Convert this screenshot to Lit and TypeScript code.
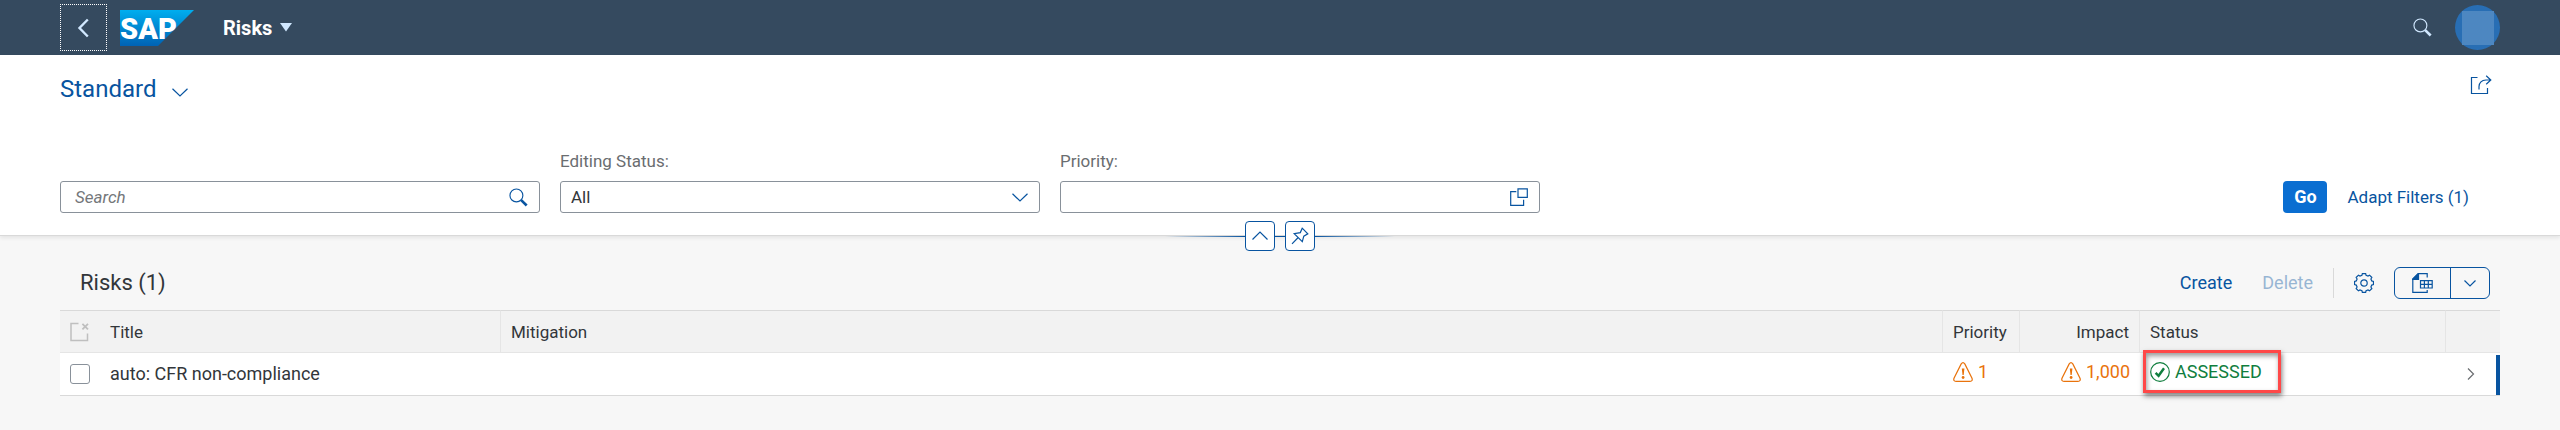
import { LitElement, html, svg, css } from "lit";
import { customElement } from "lit/decorators.js";

const chevronDown = html`<svg class="icon" width="16" height="16" viewBox="0 0 16 16" aria-hidden="true">
  <path d="M.5 4.8l7.500 7.200 7.500-7.200" />
</svg>`;

const magnifier = html`<svg class="icon" width="19" height="19" viewBox="0 0 20 20" aria-hidden="true">
  <circle cx="7.8" cy="7.8" r="6.8" />
  <path d="M12.8 12.8l5.8 5.6" stroke-width="2.8" />
</svg>`;

const warning = html`<svg class="icon" width="20" height="20" viewBox="0 0 20 20" role="img" aria-label="Warning">
  <path d="M8.2 1.9Q10-.7 11.8 1.9L19 16.2Q20 19.3 17 19.3H3Q0 19.3 1 16.2Z" />
  <path d="M8.8 6.5h2.6l-.7 6.4H9.5z" fill="currentColor" stroke="none" />
  <circle cx="10.1" cy="15.5" r="1.4" fill="currentColor" stroke="none" />
</svg>`;

const gearPath = (() => {
  const teeth = 8;
  const points: string[] = [];
  for (let i = 0; i < teeth; i++) {
    const base = (i * 2 * Math.PI) / teeth - Math.PI / 2;
    for (const [offset, radius] of [[-0.26, 8], [-0.17, 9.6], [0.17, 9.6], [0.26, 8]]) {
      const a = base + offset;
      points.push(`${(10 + radius * Math.cos(a)).toFixed(2)} ${(10 + radius * Math.sin(a)).toFixed(2)}`);
    }
  }
  return `M${points.join("L")}Z`;
})();

@customElement("app-root")
export class AppRoot extends LitElement {
  static styles = css`
    :host {
      display: block;
      min-height: 100vh;
      background: #f7f7f7;
      color: #32363a;
      font-family: Roboto, "Liberation Sans", sans-serif;
      font-size: 17px;
      line-height: 20px;
    }
    * {
      box-sizing: border-box;
    }
    button,
    input,
    select {
      font: inherit;
      color: inherit;
      margin: 0;
    }
    button {
      border: 0;
      background: none;
      padding: 0;
      cursor: pointer;
      display: flex;
      align-items: center;
      justify-content: center;
    }
    .icon {
      display: block;
      flex: none;
      fill: none;
      stroke: currentColor;
      stroke-width: 1.2;
    }
    .shell {
      display: flex;
      align-items: center;
      height: 55px;
      padding: 0 60px;
      background: #354a5f;
      color: #d1e8ff;
    }
    .back {
      width: 47px;
      height: 47px;
      border: 1px dotted #fff;
    }
    .logo {
      margin-left: 13px;
      display: block;
    }
    .logo-text {
      font: 900 29px Roboto, "Liberation Sans", sans-serif;
      fill: #fff;
    }
    .app-title {
      margin-left: 29px;
      gap: 8px;
      font-size: 20px;
      font-weight: 700;
      color: #fff;
    }
    .grow {
      flex: 1;
    }
    .avatar {
      width: 45px;
      height: 45px;
      margin-left: 23px;
      border-radius: 50%;
      background: #286eb4;
    }
    .avatar-mask {
      width: 32px;
      height: 34px;
      background: #4d87c1;
    }
    .filters {
      background: #fff;
      border-bottom: 1px solid #d9d9d9;
      box-shadow: 0 2px 4px rgba(0, 0, 0, 0.08);
      padding: 16px 60px 0;
    }
    .row {
      display: flex;
      align-items: center;
      justify-content: space-between;
    }
    .variant {
      height: 36px;
      gap: 16px;
      font-size: 24px;
      line-height: 36px;
      color: #0854a0;
    }
    .variant .icon {
      margin-top: 6px;
    }
    .share {
      color: #0854a0;
      margin-right: 8px;
      padding-bottom: 8px;
    }
    .fields {
      display: flex;
      align-items: flex-end;
      gap: 20px;
      margin-top: 44px;
    }
    .field {
      width: 480px;
      display: flex;
      flex-direction: column;
      gap: 10px;
    }
    .label {
      color: #6a6d70;
    }
    .box {
      display: flex;
      align-items: center;
      height: 32px;
      border: 1px solid #89919a;
      border-radius: 3px;
      background: #fff;
      color: #0854a0;
      padding-right: 11px;
    }
    .control {
      flex: 1;
      min-width: 0;
      height: 30px;
      border: 0;
      background: none;
      outline: 0;
      appearance: none;
      padding: 0 10px;
      color: #32363a;
    }
    .search {
      padding: 0 14px;
    }
    .search::placeholder {
      color: #74777a;
      font-style: italic;
      opacity: 1;
    }
    .search::-webkit-search-cancel-button {
      display: none;
    }
    .go {
      width: 44px;
      height: 32px;
      border-radius: 4px;
      background: #0a6ed1;
      color: #fff;
      font-size: 18px;
      font-weight: 700;
    }
    .adapt {
      height: 32px;
      color: #0854a0;
      margin-right: 31px;
    }
    .handles {
      display: flex;
      justify-content: center;
      align-items: center;
      height: 30px;
      margin: 8px 0 -16px;
      position: relative;
      color: #0854a0;
    }
    .line {
      width: 80px;
      height: 1px;
      background: linear-gradient(to right, transparent, #0854a0);
    }
    .line-mid {
      width: 10px;
      height: 1px;
      background: #0854a0;
    }
    .line-end {
      background: linear-gradient(to left, transparent, #0854a0);
    }
    .handle {
      width: 30px;
      height: 30px;
      border: 1px solid #0854a0;
      border-radius: 4px;
      background: #fff;
    }
    .content {
      padding: 31px 60px 0;
    }
    .toolbar {
      display: flex;
      align-items: center;
      height: 32px;
      padding: 0 10px 0 20px;
      color: #0854a0;
    }
    .table-title {
      margin: 0;
      flex: 1;
      font-size: 22px;
      font-weight: 400;
      line-height: 30px;
      color: #32363a;
    }
    .create,
    .delete {
      font-size: 18px;
    }
    .delete {
      margin-left: 30px;
      color: #0854a0;
      opacity: 0.4;
    }
    .separator {
      width: 1px;
      height: 30px;
      margin: 0 20px;
      background: #d9d9d9;
    }
    .split {
      display: flex;
      width: 96px;
      height: 32px;
      margin-left: 20px;
      border: 1px solid #0854a0;
      border-radius: 6px;
    }
    .export {
      flex: 1;
    }
    .menu {
      width: 39px;
      border-left: 1px solid #0854a0;
    }
    .table {
      width: 100%;
      margin-top: 11px;
      border-collapse: separate;
      border-spacing: 0;
      table-layout: fixed;
    }
    .c-select {
      width: 40px;
    }
    .c-title {
      width: 401px;
    }
    .c-priority {
      width: 77px;
    }
    .c-impact {
      width: 120px;
    }
    .c-status {
      width: 306px;
    }
    .c-nav {
      width: 54px;
    }
    th {
      height: 43px;
      padding: 0 10px;
      background: #f2f2f2;
      border-top: 1px solid #d9d9d9;
      border-bottom: 1px solid #e5e5e5;
      border-right: 1px solid #e5e5e5;
      font-weight: 400;
      text-align: left;
    }
    td {
      height: 43px;
      padding: 0 10px;
      background: #fff;
      border-bottom: 1px solid #d9d9d9;
      font-size: 18px;
    }
    th.plain {
      border-right: 0;
    }
    th.num,
    td.num {
      text-align: right;
    }
    td.nav {
      padding-right: 25px;
      background: linear-gradient(#0854a0, #0854a0) right bottom / 4px 40px no-repeat #fff;
      color: #6a6d70;
    }
    .nav-icon {
      margin-left: auto;
    }
    .deselect {
      color: #bfbfbf;
    }
    .check {
      display: block;
      appearance: none;
      width: 20px;
      height: 20px;
      border: 1px solid #89919a;
      border-radius: 3px;
      background: #fff;
    }
    .state {
      display: inline-flex;
      align-items: center;
      gap: 5px;
      color: #e9730c;
      vertical-align: middle;
      padding-bottom: 4px;
    }
    .good {
      color: #107e3e;
    }
    td.status {
      position: relative;
    }
    .highlight {
      position: absolute;
      left: 3px;
      top: -3px;
      width: 138px;
      height: 43px;
      border: 3px solid #ff4848;
      box-shadow: 1px 3px 5px rgba(0, 0, 0, 0.5), inset 1px 3px 5px rgba(0, 0, 0, 0.4);
      pointer-events: none;
    }
  `;

  render() {
    return html`
      <header class="shell">
        <button class="back" aria-label="Back">
          <svg class="icon" width="20" height="20" viewBox="0 0 20 20" aria-hidden="true">
            <path d="M13.8 1.5L5.5 10l8.3 8.5" stroke-width="2.4" />
          </svg>
        </button>
        <svg class="logo" width="74" height="36" viewBox="0 0 74 36" role="img" aria-label="SAP">
          <defs>
            <linearGradient id="sap" x1="0" y1="0" x2="0" y2="1">
              <stop offset="0" stop-color="#00aeef" />
              <stop offset="1" stop-color="#0062b4" />
            </linearGradient>
          </defs>
          <path d="M0 0H74L38 36H0Z" fill="url(#sap)" />
          <text class="logo-text" x="0" y="29">SAP</text>
        </svg>
        <button class="app-title">
          Risks
          <svg width="12" height="9" viewBox="0 0 12 9" aria-hidden="true"><path d="M0 0H12L6 8.5Z" fill="#d1e8ff" /></svg>
        </button>
        <span class="grow"></span>
        <button aria-label="Search">${magnifier}</button>
        <button class="avatar" aria-label="User menu"><span class="avatar-mask"></span></button>
      </header>

      <section class="filters">
        <div class="row">
          <button class="variant">Standard ${chevronDown}</button>
          <button class="share" aria-label="Share">
            <svg class="icon" width="22" height="20" viewBox="0 0 22 20" aria-hidden="true">
              <path d="M7.5 2.5H1.5V18.5H17.5V13" />
              <path d="M9 14.5V11.5Q9.4 5.4 16 5H20.6M16.2.8L20.8 5l-4.6 4.2" />
            </svg>
          </button>
        </div>
        <div class="fields">
          <div class="field">
            <div class="box">
              <input class="control search" type="search" placeholder="Search" aria-label="Search" />
              ${magnifier}
            </div>
          </div>
          <div class="field">
            <label class="label" for="editing">Editing Status:</label>
            <div class="box">
              <select class="control" id="editing"><option>All</option></select>
              ${chevronDown}
            </div>
          </div>
          <div class="field">
            <label class="label" for="priority">Priority:</label>
            <div class="box">
              <input class="control" id="priority" type="text" />
              <svg class="icon" width="18" height="18" viewBox="0 0 18 18" aria-hidden="true">
                <path d="M8 .8H17.3V9.4H8ZM6.3 3.6H.7V17.3H13.6V11.8" />
              </svg>
            </div>
          </div>
          <span class="grow"></span>
          <button class="go">Go</button>
          <button class="adapt">Adapt Filters (1)</button>
        </div>
        <div class="handles">
          <span class="line"></span>
          <button class="handle" aria-label="Collapse header">
            <svg class="icon" width="16" height="16" viewBox="0 0 16 16" aria-hidden="true"><path d="M.5 11.5l7.500-7.500 7.500 7.500" /></svg>
          </button>
          <span class="line-mid"></span>
          <button class="handle" aria-label="Pin header">
            <svg class="icon" width="18" height="18" viewBox="0 0 18 18" aria-hidden="true">
              <path d="M11.2 1.2L16.8 6.8 12.8 9.2 11.3 14.7 3.2 6.6 9.3 5.6ZM7.2 10.5L1 16.8" />
            </svg>
          </button>
          <span class="line line-end"></span>
        </div>
      </section>

      <main class="content">
        <div class="toolbar">
          <h2 class="table-title">Risks (1)</h2>
          <button class="create">Create</button>
          <button class="delete" disabled>Delete</button>
          <span class="separator"></span>
          <button aria-label="Settings">
            <svg class="icon" width="20" height="20" viewBox="0 0 20 20" aria-hidden="true">
              ${svg`<path d=${gearPath} />`}
              <circle cx="10" cy="10" r="3.2" />
            </svg>
          </button>
          <div class="split">
            <button class="export" aria-label="Export">
              <svg class="icon" width="21" height="20" viewBox="0 0 21 20" aria-hidden="true">
                <path d="M15.2 4.6V.7H6.2L.8 6V19.3H15.2V17" />
                <path d="M.5 6.5L6.5.5V6.5Z" fill="currentColor" />
                <path d="M8.5 7.6H20.2V15H8.5ZM8.5 11.3H20.2M12.4 7.6V15M16.3 7.6V15" />
              </svg>
            </button>
            <button class="menu" aria-label="More export options">
              <svg class="icon" width="12" height="12" viewBox="0 0 12 12" aria-hidden="true"><path d="M.5 3.5L6 9l5.5-5.5" /></svg>
            </button>
          </div>
        </div>

        <table class="table">
          <colgroup>
            <col class="c-select" /><col class="c-title" /><col /><col class="c-priority" />
            <col class="c-impact" /><col class="c-status" /><col class="c-nav" />
          </colgroup>
          <thead>
            <tr>
              <th class="plain">
                <svg class="icon deselect" width="20" height="20" viewBox="0 0 20 20" role="img" aria-label="Deselect all">
                  <path d="M8.5 1.6H1V18.5H17.5V11.5" stroke-width="1.5" />
                  <path d="M12.4 1.8l5.6 5.6M18 1.8l-5.6 5.6" stroke-width="1.8" />
                </svg>
              </th>
              <th>Title</th>
              <th>Mitigation</th>
              <th>Priority</th>
              <th class="num">Impact</th>
              <th>Status</th>
              <th class="plain"></th>
            </tr>
          </thead>
          <tbody>
            <tr>
              <td><input class="check" type="checkbox" aria-label="Select auto: CFR non-compliance" /></td>
              <td>auto: CFR non-compliance</td>
              <td></td>
              <td><span class="state">${warning}1</span></td>
              <td class="num"><span class="state">${warning}1,000</span></td>
              <td class="status">
                <span class="state good">
                  <svg class="icon" width="20" height="20" viewBox="0 0 20 20" aria-hidden="true">
                    <circle cx="10" cy="10" r="9.3" />
                    <path d="M5.6 10.8l3 3L14 6.2" stroke-width="2.4" />
                  </svg>ASSESSED</span>
                <span class="highlight"></span>
              </td>
              <td class="nav">
                <svg class="icon nav-icon" width="8" height="14" viewBox="0 0 8 14" aria-hidden="true">
                  <path d="M1 1.5L6.5 7 1 12.5" />
                </svg>
              </td>
            </tr>
          </tbody>
        </table>
      </main>
    `;
  }
}
